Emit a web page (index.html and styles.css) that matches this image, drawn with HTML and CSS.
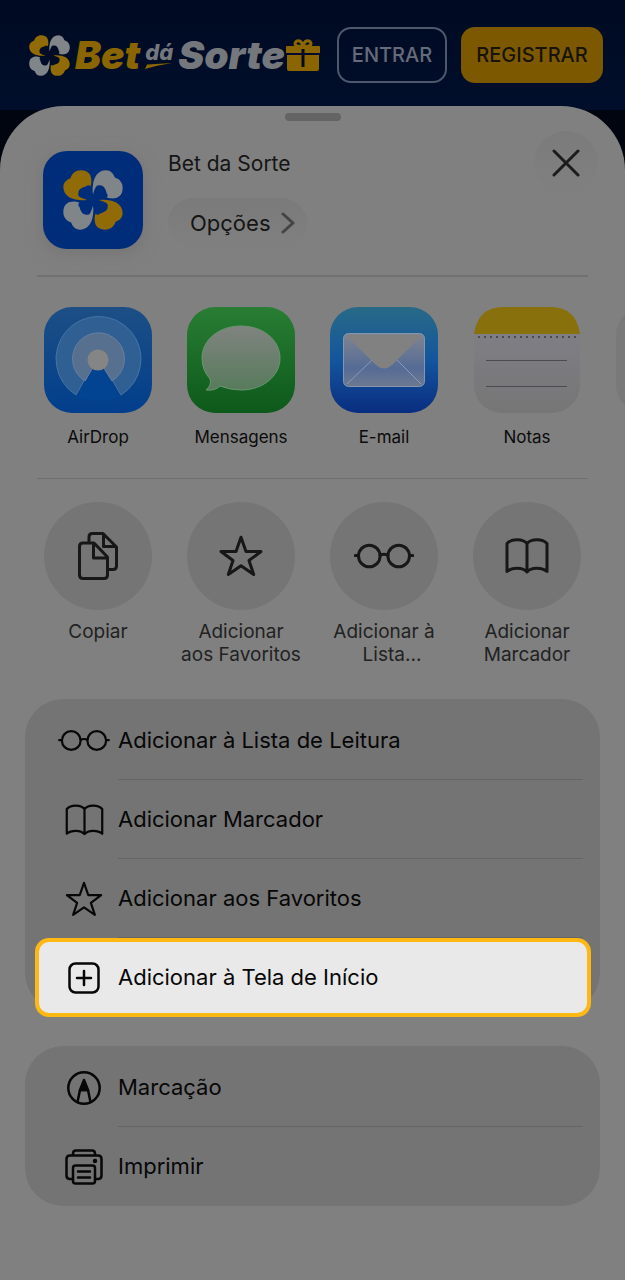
FILE: index.html
```html
<!DOCTYPE html>
<html lang="pt-BR">
<head>
    <meta charset="UTF-8">
    <meta name="viewport" content="width=device-width, initial-scale=1.0">
    <title>Bet da Sorte</title>
    <link rel="stylesheet" href="styles.css">
</head>
<body>

    <!-- Shared icons -->
    <svg class="defs" width="0" height="0" aria-hidden="true">
        <defs>
            <path id="petal" d="M-17 0C-50 4-87-6-87-38C-87-52-77-60-66-64C-62-78-50-88-34-87C-12-86-3-72-5-50L-7-40Q-14-46-20-40Q-44-34-43-20Q-45-12-38-8Q-30-4-17 0Z"/>
            <symbol id="clover" viewBox="-88 -88 176 176">
                <use href="#petal" class="petal-gold"/>
                <use href="#petal" class="petal-white" transform="rotate(90)"/>
                <use href="#petal" class="petal-gold" transform="rotate(180)"/>
                <use href="#petal" class="petal-white" transform="rotate(270)"/>
            </symbol>
            <symbol id="glasses" viewBox="0 0 60 26">
                <circle cx="15.3" cy="13" r="10.8"/>
                <circle cx="44.7" cy="13" r="10.8"/>
                <path d="M1.3 12.5H4.5M55.5 12.5h3.200M26 12Q30 10.5 34 12"/>
            </symbol>
            <symbol id="book" viewBox="0 0 44 36">
                <path d="M22 5.500C18 .8 7 .2 2 5.500V33.500C7 29 18 29 22 34C26 29 37 29 42 33.500V5.500C37 .2 26 .8 22 5.500V34"/>
            </symbol>
            <symbol id="star" viewBox="0 0 44 42">
                <path d="M22 2.200L27 16.500H42L30 25.500L34.700 39.500L22 30.800L9.300 39.500L14 25.500L2 16.500H17Z"/>
            </symbol>
        </defs>
    </svg>

    <!-- Site header -->
    <header class="site-header">
        <div class="brand">
            <svg class="brand-clover" aria-hidden="true"><use href="#clover"/></svg>
            <span class="brand-bet">Bet</span>
            <span class="brand-da">dá
                <svg class="brand-swoosh" viewBox="0 0 28 6" aria-hidden="true"><path d="M2 1.500L27 0Q14 2 0 6Z"/></svg>
            </span>
            <span class="brand-sorte">Sorte</span>
            <svg class="brand-gift" viewBox="0 0 36 33" aria-hidden="true">
                <path d="M2 7H34Q35 7 35 8V14H1V8Q1 7 2 7ZM2 16H34V30Q34 32 32 32H4Q2 32 2 30Z"/>
                <path class="gift-bow" d="M18 7Q10 8 10 4.500Q11 1 14.500 2Q17 3 18 7Q26 8 26 4.500Q25 1 21.500 2Q19 3 18 7"/>
                <path class="gift-slot" d="M18 10V28"/>
            </svg>
        </div>
        <button class="btn btn-login" type="button">ENTRAR</button>
        <button class="btn btn-register" type="button">REGISTRAR</button>
    </header>

    <!-- Share sheet -->
    <main class="sheet">
        <div class="grabber"></div>

        <div class="sheet-head">
            <div class="app-icon">
                <svg width="60" height="60" aria-hidden="true"><use href="#clover"/></svg>
            </div>
            <div class="app-info">
                <h1 class="app-name">Bet da Sorte</h1>
                <button class="options" type="button">
                    Opções
                    <svg class="line-icon chevron" width="14" height="22" viewBox="0 0 14 22" aria-hidden="true"><path d="M2 2L12 11L2 20"/></svg>
                </button>
            </div>
            <button class="close" type="button" aria-label="Fechar">
                <svg class="line-icon" width="28" height="28" viewBox="0 0 28 28" aria-hidden="true"><path d="M2 2L26 26M26 2L2 26"/></svg>
            </button>
        </div>

        <!-- Apps -->
        <div class="share-row apps">
            <button class="share-item" type="button">
                <svg class="app-tile" viewBox="0 0 108 106" aria-hidden="true">
                    <linearGradient id="airBg" x2="0" y2="1"><stop stop-color="#1d4f85"/><stop offset="1" stop-color="#013e8c"/></linearGradient>
                    <rect width="108" height="106" rx="28" fill="url(#airBg)"/>
                    <path d="M32 88A42.500 42.500 0 1 1 77 88L54 49Z" fill="#305f93" stroke="#4475a6"/>
                    <path d="M41 74A26 26 0 1 1 68 74L54 52Z" fill="#58708f" stroke="#657fa0"/>
                    <path d="M54 54L33 90Q54 98 76 90Z" fill="#024392"/>
                    <circle cx="54" cy="53" r="10.500" fill="#858585"/>
                </svg>
                <span>AirDrop</span>
            </button>
            <button class="share-item" type="button">
                <svg class="app-tile" viewBox="0 0 108 106" aria-hidden="true">
                    <linearGradient id="msgBg" x2="0" y2="1"><stop stop-color="#297d34"/><stop offset="1" stop-color="#0d591b"/></linearGradient>
                    <linearGradient id="msgFg" x2="0" y2="1"><stop stop-color="#808380"/><stop offset="1" stop-color="#577b5b"/></linearGradient>
                    <rect width="108" height="106" rx="28" fill="url(#msgBg)"/>
                    <path d="M54 19C76 19 93 33 93 51S76 83 54 83Q43 83 33 79Q28 84 19 83Q25 78 23 72Q15 63 15 51C15 33 32 19 54 19Z" fill="url(#msgFg)" stroke="#6a9570"/>
                </svg>
                <span>Mensagens</span>
            </button>
            <button class="share-item" type="button">
                <svg class="app-tile" viewBox="0 0 108 106" aria-hidden="true">
                    <linearGradient id="mailBg" x2="0" y2="1"><stop stop-color="#286a86"/><stop offset=".5" stop-color="#14559e"/><stop offset="1" stop-color="#092d80"/></linearGradient>
                    <linearGradient id="mailFg" x2="0" y2="1"><stop stop-color="#808590"/><stop offset=".65" stop-color="#556b96"/><stop offset="1" stop-color="#6d7991"/></linearGradient>
                    <rect width="108" height="106" rx="28" fill="url(#mailBg)"/>
                    <rect x="13.500" y="26.500" width="81" height="53" rx="5" fill="url(#mailFg)" stroke="#8396ae"/>
                    <path d="M17 77L42 53M91 77L67 53" fill="none" stroke="#8a9bb4"/>
                    <path d="M16 28H92L62 58Q54 65 46 58Z" fill="#818181"/>
                </svg>
                <span>E-mail</span>
            </button>
            <button class="share-item" type="button">
                <svg class="app-tile" viewBox="0 0 108 106" aria-hidden="true">
                    <linearGradient id="noteBg" x2="0" y2="1"><stop stop-color="#81818a"/><stop offset="1" stop-color="#767676"/></linearGradient>
                    <rect x="1" width="106" height="106" rx="28" fill="url(#noteBg)"/>
                    <path d="M1 27Q5 0 30 0H78Q103 0 107 27Z" fill="#88700d"/>
                    <path d="M5 30H104" stroke="#4b4b4b" stroke-width="2" stroke-dasharray="2 4" fill="none"/>
                    <path d="M13 53.500H94M13 79.500H94" stroke="#4c4c50" fill="none"/>
                </svg>
                <span>Notas</span>
            </button>
            <div class="share-item" aria-hidden="true"><div class="tile-blank"></div></div>
        </div>

        <!-- Quick actions -->
        <div class="share-row actions">
            <button class="share-item" type="button">
                <span class="circle">
                    <svg class="line-icon" width="40" height="48" viewBox="0 0 40 48" aria-hidden="true">
                        <path d="M11 11V5Q11 1.500 14.500 1.500H25L38.500 15V34Q38.500 37.500 35 37.500H30M25.500 2V14.500H38M5 11H16L29.500 25V43Q29.500 46.500 26 46.500H5Q1.500 46.500 1.500 43V14.500Q1.500 11 5 11ZM15.500 11V26H29"/>
                    </svg>
                </span>
                <span>Copiar</span>
            </button>
            <button class="share-item" type="button">
                <span class="circle"><svg class="line-icon" width="44" height="42" aria-hidden="true"><use href="#star"/></svg></span>
                <span>Adicionar<br>aos Favoritos</span>
            </button>
            <button class="share-item" type="button">
                <span class="circle"><svg class="line-icon" width="60" height="26" aria-hidden="true"><use href="#glasses"/></svg></span>
                <span>Adicionar à<br>&nbsp;&nbsp;&nbsp;Lista...</span>
            </button>
            <button class="share-item" type="button">
                <span class="circle"><svg class="line-icon" width="44" height="36" aria-hidden="true"><use href="#book"/></svg></span>
                <span>Adicionar<br>Marcador</span>
            </button>
        </div>

        <!-- Action lists -->
        <div class="card">
            <button class="row" type="button">
                <span class="row-icon"><svg class="line-icon" width="52" height="23" aria-hidden="true"><use href="#glasses"/></svg></span>
                <span class="row-label">Adicionar à Lista de Leitura</span>
            </button>
            <button class="row" type="button">
                <span class="row-icon"><svg class="line-icon" width="39" height="32" aria-hidden="true"><use href="#book"/></svg></span>
                <span class="row-label">Adicionar Marcador</span>
            </button>
            <button class="row" type="button">
                <span class="row-icon"><svg class="line-icon" width="38" height="36" aria-hidden="true"><use href="#star"/></svg></span>
                <span class="row-label">Adicionar aos Favoritos</span>
            </button>
            <button class="row row-highlight" type="button">
                <span class="row-icon">
                    <svg class="line-icon" width="32" height="32" viewBox="0 0 32 32" aria-hidden="true">
                        <rect x="1.500" y="1.500" width="29" height="29" rx="6"/><path d="M16 9V23M9 16H23"/>
                    </svg>
                </span>
                <span class="row-label">Adicionar à Tela de Início</span>
            </button>
        </div>

        <div class="card">
            <button class="row" type="button">
                <span class="row-icon">
                    <svg class="line-icon" width="34" height="34" viewBox="0 0 34 34" aria-hidden="true">
                        <circle cx="17" cy="17" r="15.700"/>
                        <path d="M10.500 31L13 19H21L23.500 31"/><path class="solid" d="M17 9L13 19H21Z"/>
                    </svg>
                </span>
                <span class="row-label">Marcação</span>
            </button>
            <button class="row" type="button">
                <span class="row-icon">
                    <svg class="line-icon" width="38" height="36" viewBox="0 0 38 36" aria-hidden="true">
                        <path d="M8 6V4.500Q8 1.500 11 1.500H27Q30 1.500 30 4.500V6M8 30H5Q1.500 30 1.500 26.500V10Q1.500 6.500 5 6.500H33Q36.500 6.500 36.500 10V26.500Q36.500 30 33 30H30"/>
                        <rect x="8" y="16.500" width="22" height="18" rx="2.500"/>
                        <path d="M13 22.500H25M13 28.500H25"/><circle class="solid" cx="30" cy="12" r="1"/>
                    </svg>
                </span>
                <span class="row-label">Imprimir</span>
            </button>
        </div>
    </main>

</body>
</html>
```
FILE: styles.css
```css
* {
    box-sizing: border-box;
}

body {
    margin: 0;
    min-height: 100vh;
    display: flex;
    flex-direction: column;
    font-family: Inter, "Liberation Sans", sans-serif;
    background-color: #00050f;
    overflow-x: hidden;
}

button {
    margin: 0;
    padding: 0;
    border: none;
    background: none;
    color: inherit;
    font-family: inherit;
    cursor: pointer;
}

svg {
    display: block;
    flex: none;
}

.defs {
    position: absolute;
}

.petal-gold {
    fill: #916b06;
}

.petal-white {
    fill: #80858a;
}

/* Header */
.site-header {
    display: flex;
    align-items: center;
    height: 110px;
    padding: 0 22px 0 29px;
    background: linear-gradient(#000b22, #000e2b);
}

.brand {
    display: flex;
    align-items: center;
    flex: 1;
    font-style: italic;
    font-weight: 900;
    font-size: 39px;
    line-height: 40px;
    color: #74777c;
}

.brand-clover {
    width: 41px;
    height: 41px;
    margin-right: 5px;
}

.brand-bet {
    color: #8a6500;
}

.brand-da {
    margin: 0 5px;
    font-size: 22px;
    line-height: 22px;
    font-weight: 800;
}

.brand-swoosh {
    width: 28px;
    height: 6px;
    fill: #8a6500;
}

.brand-gift {
    width: 36px;
    height: 33px;
    fill: #8a6500;
}

.gift-bow {
    fill: none;
    stroke: #8a6500;
    stroke-width: 3;
}

.gift-slot {
    stroke: #000c26;
    stroke-width: 3;
}

.btn {
    height: 56px;
    border-radius: 14px;
    font-size: 20px;
    font-weight: 500;
}

.btn-login {
    width: 110px;
    margin-right: 14px;
    border: 2px solid #4d586c;
    color: #666b7a;
}

.btn-register {
    width: 142px;
    background-color: #7c5900;
    color: #171309;
}

/* Sheet */
.sheet {
    flex: 1;
    margin-top: -4px;
    padding: 7px 25px 64px;
    border-radius: 64px 64px 0 0;
    background-color: #808080;
    overflow: hidden;
}

.grabber {
    width: 56px;
    height: 8px;
    margin: 0 auto;
    border-radius: 4px;
    background-color: #646464;
}

.sheet-head {
    display: flex;
    align-items: flex-start;
    margin: 0 12px;
    padding: 30px 0 26px 6px;
    border-bottom: 2px solid #717171;
}

.app-icon {
    display: flex;
    align-items: center;
    justify-content: center;
    width: 100px;
    height: 98px;
    border-radius: 24px;
    background-color: #002d7a;
    box-shadow: 0 4px 16px #747474;
}

.app-info {
    flex: 1;
    padding-left: 25px;
}

.app-name {
    margin: 0 0 21px;
    font-size: 21px;
    line-height: 26px;
    font-weight: 400;
    color: #151515;
}

.options {
    display: flex;
    align-items: center;
    gap: 10px;
    height: 50px;
    padding: 0 12px 0 22px;
    border-radius: 25px;
    background: linear-gradient(#7a7a7a, #808080);
    font-size: 22px;
    color: #151515;
}

.close {
    display: flex;
    align-items: center;
    justify-content: center;
    width: 64px;
    height: 64px;
    margin: -20px -10px 0 0;
    border-radius: 50%;
    background: linear-gradient(#7b7b7b, #808080);
    color: #1c1c1c;
}

.line-icon {
    fill: none;
    stroke: currentColor;
    stroke-width: 3;
    stroke-linecap: round;
    stroke-linejoin: round;
}

.chevron {
    color: #444444;
}

.solid {
    fill: currentColor;
}

/* Share rows */
.share-row {
    display: flex;
    gap: 19px;
    margin: 0 -25px;
    padding: 30px 0 0 36px;
    overflow: hidden;
}

.share-item {
    display: flex;
    flex-direction: column;
    align-items: center;
    flex: none;
    width: 124px;
    font-size: 17px;
    line-height: 24px;
    color: #0b0b0b;
}

.app-tile {
    width: 108px;
    height: 106px;
    margin-bottom: 12px;
}

.tile-blank {
    width: 108px;
    height: 106px;
    border-radius: 28px;
    background-color: #797979;
}

.actions {
    margin: 29px 12px 0;
    padding: 23px 0 0;
    border-top: 1px solid #6f6f6f;
    overflow: visible;
}

.actions .share-item {
    font-size: 19px;
    line-height: 23px;
    color: #222222;
}

.actions .share-item:first-child {
    margin-left: -1px;
}

.circle {
    display: flex;
    align-items: center;
    justify-content: center;
    width: 108px;
    height: 108px;
    margin-bottom: 10px;
    border-radius: 50%;
    background-color: #757575;
    color: #171717;
}

/* Lists */
.card {
    display: flex;
    flex-direction: column;
    margin-top: 33px;
    padding-top: 2px;
    border-radius: 38px;
    background-color: #747474;
}

.card + .card {
    margin-top: 35px;
}

.row {
    display: flex;
    align-items: center;
    gap: 8px;
    padding: 0 17px 0 33px;
    font-size: 22px;
    text-align: left;
    color: #070707;
}

.row .line-icon {
    stroke-width: 2.5;
}

.row-icon {
    display: flex;
    justify-content: center;
    flex: none;
    width: 52px;
}

.row-label {
    flex: 1;
    line-height: 78px;
    border-bottom: 1px solid #656565;
}

.row:last-child .row-label {
    border-bottom-color: transparent;
}

.row-highlight {
    margin: 0 9px -6px 10px;
    padding: 0 13px 0 19px;
    border: 4px solid #fdb813;
    border-radius: 14px;
    background-color: #e9e9e9;
}

.row-highlight .row-label {
    line-height: 70px;
}
```
